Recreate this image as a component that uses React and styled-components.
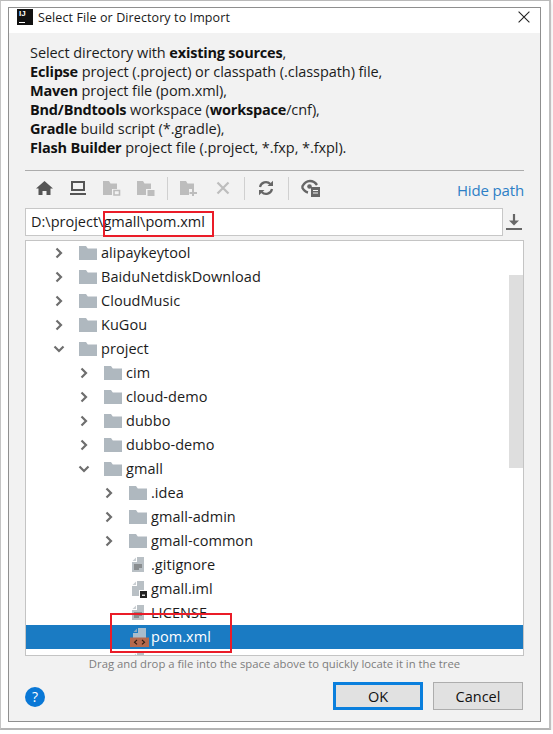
import styled, { createGlobalStyle } from "styled-components";

const Global = createGlobalStyle`
  html, body { margin: 0; padding: 0; background: #fff; }
  body { font-family: "Open Sans", "Noto Sans", sans-serif; }
`;

const Shot = styled.div`
  position: relative;
  box-sizing: border-box;
  width: 551px;
  height: 730px;
  padding: 6px 8px 6px 7px;
  border-top: 1px solid #b9b9b9;
  border-right: 2px solid #c0c0c0;
  border-bottom: 2px solid #b4b4b4;
  border-left: 1px solid #c4c4c4;
  box-shadow: 0 2px 4px rgba(0, 0, 0, 0.14);
`;
const Dialog = styled.div`
  box-sizing: border-box;
  height: 100%;
  display: flex;
  flex-direction: column;
  border: 1px solid #8f8f8f;
  background: #f2f2f2;
`;
const TitleBar = styled.div`
  height: 25px;
  flex: none;
  display: flex;
  align-items: flex-start;
  background: #fff;
  padding: 1px 10px 0 8px;
  box-sizing: border-box;
  gap: 5px;
`;
const Title = styled.div`
  flex: 1;
  font-size: 12.5px;
  line-height: 17px;
  color: #1a1a1a;
  letter-spacing: 0.1px;
`;
const Logo = styled.div`
  width: 16px;
  height: 16px;
  background: #111;
  color: #fff;
  font: bold 8px/10px "Liberation Sans", sans-serif;
  padding-left: 2px;
  box-sizing: border-box;
  position: relative;
  &::after {
    content: "";
    position: absolute;
    left: 2px;
    bottom: 2px;
    width: 6px;
    height: 1px;
    background: #fff;
  }
`;
const CloseSlot = styled.div`
  margin-top: 2px;
  line-height: 0;
`;
const Body = styled.div`
  flex: 1;
  display: flex;
  flex-direction: column;
  padding: 10px 16px 0 16px;
  min-height: 0;
`;
const Intro = styled.div`
  font-size: 14.5px;
  line-height: 19px;
  color: #1c1c1c;
  padding-left: 5px;
  letter-spacing: -0.07px;
  height: 127px;
  b { font-weight: 700; color: #111; letter-spacing: -0.2px; }
`;
const Toolbar = styled.div`
  height: 35px;
  flex: none;
  display: flex;
  align-items: center;
  border-top: 1px solid #acacac;
  padding-left: 2px;
  box-sizing: border-box;
`;
const ToolIcon = styled.div`
  width: 34px;
  height: 20px;
  flex: none;
  display: flex;
  justify-content: center;
  align-items: center;
`;
const ToolGap = styled.div`
  width: 1px;
  height: 23px;
  background: #d0d0d0;
  flex: none;
  margin: 0 ${(p) => p.$m || 4}px;
`;
const HideLink = styled.div`
  margin: 4px 0 0 auto;
  font-size: 15px;
  letter-spacing: -0.15px;
  color: #2d7fc6;
`;
const PathRow = styled.div`
  flex: none;
  display: flex;
  align-items: center;
  height: 28px;
  margin-top: 3px;
`;
const PathInput = styled.div`
  box-sizing: border-box;
  width: 478px;
  height: 28px;
  background: #fff;
  border: 1px solid #c7c7c7;
  padding-left: 5px;
  font-size: 14.5px;
  line-height: 25px;
  color: #1c1c1c;
`;
const PathAction = styled.div`
  flex: 1;
  display: flex;
  justify-content: flex-end;
  padding-right: 2px;
`;
const TreeBox = styled.div`
  position: relative;
  flex: none;
  height: 416px;
  margin-top: 4px;
  background: #fff;
  border: 1px solid #c4c4c4;
  box-sizing: border-box;
  overflow: hidden;
`;
const Thumb = styled.div`
  position: absolute;
  top: 34px;
  right: 0;
  width: 14px;
  height: 193px;
  background: #dedede;
`;
const Row = styled.div`
  position: relative;
  height: 24px;
  display: flex;
  align-items: center;
  padding-left: ${(p) => 25 + p.$depth * 25}px;
  background: ${(p) => (p.$selected ? "#1a7bc3" : "transparent")};
  color: ${(p) => (p.$selected ? "#fff" : "#1c1c1c")};
  font-size: 14.5px;
  letter-spacing: 0.05px;
`;
const RowLabel = styled.span`
  margin-top: -2px;
`;
const ArrowSlot = styled.div`
  width: 16px;
  height: 16px;
  flex: none;
  display: flex;
  align-items: center;
  justify-content: center;
`;
const IconSlot = styled.div`
  width: 24px;
  height: 20px;
  margin-left: 10px;
  flex: none;
  display: flex;
  align-items: center;
  justify-content: ${(p) => (p.$file ? "center" : "flex-start")};
  padding-left: ${(p) => (p.$file ? 0 : 2)}px;
  box-sizing: border-box;
`;
const Hint = styled.div`
  flex: none;
  text-align: center;
  font-size: 11.3px;
  line-height: 16px;
  color: #7d7d7d;
`;
const Footer = styled.div`
  flex: none;
  display: flex;
  align-items: center;
  margin-top: 10px;
  padding-right: 1px;
`;
const HelpButton = styled.div`
  width: 20px;
  height: 20px;
  border-radius: 50%;
  background: #0a78d6;
  color: #fff;
  font-size: 14px;
  line-height: 20px;
  text-align: center;
  margin: 2px auto 0 0;
`;
const DialogButton = styled.div`
  box-sizing: border-box;
  width: 90px;
  height: 28px;
  margin-left: 10px;
  display: flex;
  align-items: center;
  justify-content: center;
  background: #e1e1e1;
  font-size: 14.5px;
  color: #111;
  border: ${(p) => (p.$primary ? "3px solid #0a7fdd" : "1px solid #adadad")};
`;
const RedBox = styled.div`
  position: absolute;
  left: ${(p) => p.$x}px;
  top: ${(p) => p.$y}px;
  width: ${(p) => p.$w}px;
  height: ${(p) => p.$h}px;
  box-sizing: border-box;
  border: 2px solid #ea1c28;
`;

const Chevron = ({ open }) => (
  <svg width="12" height="12" viewBox="0 0 12 12">
    <path
      d={open ? "M1.5 3.5 6 8l4.500-4.500" : "M3.500 1.500 8 6l-4.500 4.500"}
      fill="none"
      stroke="#6e6e6e"
      strokeWidth="2.200"
    />
  </svg>
);

const Folder = () => (
  <svg width="18" height="14" viewBox="0 0 18 14">
    <path d="M0 0h7l1.800 2.500H18V14H0z" fill="#afb8bf" />
  </svg>
);

const FileIcon = ({ badge }) => (
  <svg width="16" height="18" viewBox="0 0 16 18">
    <path d="M6 1h7v15H1V6h5z" fill="#b9c0c5" />
    <path d="M5 1.500V5H1.500z" fill="#c9ced2" />
    {!badge && <path d="M3 8.500h8v1H3zM3 10.500h8v1H3zM3 12.500h5v1H3z" fill="#5a5a5a" />}
    {badge === "iml" && (
      <>
        <path d="M8 10h8v8H8z" fill="#fff" />
        <path d="M9 11h7v7H9z" fill="#222" />
        <path d="M11 14.500h3V16h-3z" fill="#ddd" />
      </>
    )}
  </svg>
);

const XmlIcon = () => (
  <svg width="19" height="20" viewBox="0 0 19 20">
    <path d="M8 1h8v10H3V6h5z" fill="#a9bccb" />
    <path d="M7 1.500V5H3.500z" fill="#86a6bf" />
    <path d="M0 10.500h19V20H0z" fill="#b5694d" />
    <path d="M7 13 4.500 15.200 7 17.400M12 13l2.500 2.200-2.500 2.200" fill="none" stroke="#2b1b14" strokeWidth="1.100" />
  </svg>
);

const Home = () => (
  <svg width="17" height="14" viewBox="0 0 17 14">
    <path d="M8.500 0 0 7.500h2.500V14h4v-4h4v4h4V7.500H17z" fill="#555" />
  </svg>
);
const Desktop = () => (
  <svg width="16" height="14" viewBox="0 0 16 14">
    <path d="M2 1h12v8H2z" fill="none" stroke="#555" strokeWidth="2" />
    <path d="M0 12h16v2H0z" fill="#555" />
  </svg>
);
const FolderTool = ({ mark }) => (
  <svg width="18" height="16" viewBox="0 0 18 16">
    <path d="M0 1h6l1.500 2.500H14V9H9v6H0z" fill="#bdbdbd" />
    {mark === "square" && <path d="M11 10.500h5.500V15H11z" fill="none" stroke="#bdbdbd" strokeWidth="1.600" />}
    {mark === "solid" && <path d="M10.500 10h7v6h-7z" fill="#bdbdbd" />}
    {mark === "plus" && <path d="M12 9h2v3h3v2h-3v2h-2v-2H9.500v-2H12z" fill="#bdbdbd" />}
  </svg>
);
const Cross = () => (
  <svg width="14" height="14" viewBox="0 0 14 14">
    <path d="m1.500 1.500 11 11m0-11-11 11" stroke="#bdbdbd" strokeWidth="2.200" />
  </svg>
);
const Refresh = () => (
  <svg width="16" height="16" viewBox="0 0 16 16">
    <path d="M2 7a6 6 0 0 1 10.300-3M14 9a6 6 0 0 1-10.300 3" fill="none" stroke="#666" strokeWidth="2.200" />
    <path d="M9.500 6H15V.8zM6.500 10H1v5.200z" fill="#666" />
  </svg>
);
const EyeDoc = () => (
  <svg width="20" height="18" viewBox="0 0 20 18">
    <path d="M1 8c2-4 5-6 8-6s5 1 7 4" fill="none" stroke="#666" strokeWidth="2.400" />
    <path d="M1 8c1.500 3 3.500 5 6 5.500" fill="none" stroke="#666" strokeWidth="2.400" />
    <circle cx="8.500" cy="7.500" r="2.300" fill="#666" />
    <path d="M10 8h9v10h-9z" fill="#666" />
    <path d="M12 11h5v1h-5zM12 13.500h5v1h-5z" fill="#f2f2f2" />
  </svg>
);
const Download = () => (
  <svg width="16" height="18" viewBox="0 0 16 18">
    <path d="M8 1v9" stroke="#666" strokeWidth="2.200" />
    <path d="M3 7.500h10L8 12.500z" fill="#666" />
    <path d="M0 15h16v2H0z" fill="#666" />
  </svg>
);
const Close = () => (
  <svg width="12" height="12" viewBox="0 0 12 12">
    <path d="m.6.6 10.800 10.800m0-10.800L.6 11.400" stroke="#222" strokeWidth="1.100" />
  </svg>
);

const rows = [
  { depth: 0, kind: "closed", name: "alipaykeytool" },
  { depth: 0, kind: "closed", name: "BaiduNetdiskDownload" },
  { depth: 0, kind: "closed", name: "CloudMusic" },
  { depth: 0, kind: "closed", name: "KuGou" },
  { depth: 0, kind: "open", name: "project" },
  { depth: 1, kind: "closed", name: "cim" },
  { depth: 1, kind: "closed", name: "cloud-demo" },
  { depth: 1, kind: "closed", name: "dubbo" },
  { depth: 1, kind: "closed", name: "dubbo-demo" },
  { depth: 1, kind: "open", name: "gmall" },
  { depth: 2, kind: "closed", name: ".idea" },
  { depth: 2, kind: "closed", name: "gmall-admin" },
  { depth: 2, kind: "closed", name: "gmall-common" },
  { depth: 2, kind: "file", name: ".gitignore" },
  { depth: 2, kind: "iml", name: "gmall.iml" },
  { depth: 2, kind: "file", name: "LICENSE" },
  { depth: 2, kind: "xml", name: "pom.xml", selected: true },
  { depth: 2, kind: "file", name: "" },
];

function TreeRow({ depth, kind, name, selected }) {
  const isFolder = kind === "closed" || kind === "open";
  return (
    <Row $depth={depth} $selected={selected}>
      <ArrowSlot>{isFolder && <Chevron open={kind === "open"} />}</ArrowSlot>
      <IconSlot $file={!isFolder}>
        {isFolder && <Folder />}
        {kind === "file" && <FileIcon />}
        {kind === "iml" && <FileIcon badge="iml" />}
        {kind === "xml" && <XmlIcon />}
      </IconSlot>
      <RowLabel>{name}</RowLabel>
    </Row>
  );
}

export default function App() {
  return (
    <Shot>
      <Global />
      <Dialog>
        <TitleBar>
          <Logo>IJ</Logo>
          <Title>Select File or Directory to Import</Title>
          <CloseSlot><Close /></CloseSlot>
        </TitleBar>
        <Body>
          <Intro>
            Select directory with <b>existing sources</b>,<br />
            <b>Eclipse</b> project (.project) or classpath (.classpath) file,<br />
            <b>Maven</b> project file (pom.xml),<br />
            <b>Bnd/Bndtools</b> workspace (<b>workspace</b>/cnf),<br />
            <b>Gradle</b> build script (*.gradle),<br />
            <b>Flash Builder</b> project file (.project, *.fxp, *.fxpl).
          </Intro>
          <Toolbar>
            <ToolIcon><Home /></ToolIcon>
            <ToolIcon><Desktop /></ToolIcon>
            <ToolIcon><FolderTool mark="square" /></ToolIcon>
            <ToolIcon><FolderTool mark="solid" /></ToolIcon>
            <ToolGap />
            <ToolIcon><FolderTool mark="plus" /></ToolIcon>
            <ToolIcon><Cross /></ToolIcon>
            <ToolGap />
            <ToolIcon><Refresh /></ToolIcon>
            <ToolGap $m={5} />
            <ToolIcon><EyeDoc /></ToolIcon>
            <HideLink>Hide path</HideLink>
          </Toolbar>
          <PathRow>
            <PathInput>D:\project\gmall\pom.xml</PathInput>
            <PathAction><Download /></PathAction>
          </PathRow>
          <TreeBox>
            {rows.map((r, i) => (
              <TreeRow key={i} {...r} />
            ))}
            <Thumb />
          </TreeBox>
          <Hint>Drag and drop a file into the space above to quickly locate it in the tree</Hint>
          <Footer>
            <HelpButton>?</HelpButton>
            <DialogButton $primary>OK</DialogButton>
            <DialogButton>Cancel</DialogButton>
          </Footer>
        </Body>
      </Dialog>
      <RedBox $x={102} $y={210} $w={111} $h={26} />
      <RedBox $x={109} $y={612} $w={122} $h={40} />
    </Shot>
  );
}
